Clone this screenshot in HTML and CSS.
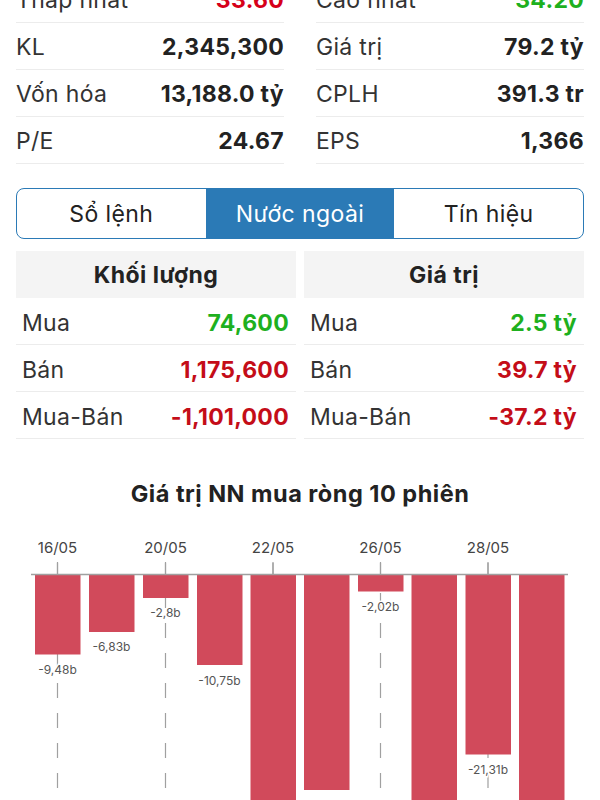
FILE: index.html
```html
<!DOCTYPE html>
<html lang="vi">
<head>
    <meta charset="UTF-8">
    <meta name="viewport" content="width=device-width, initial-scale=1.0">
    <title>Nước ngoài</title>
    <link rel="stylesheet" href="styles.css">
</head>
<body>
    <div class="stats">
        <div class="stats-col">
            <div class="stat-row"><span class="stat-label">Thấp nhất</span><span class="stat-value down-top">33.60</span></div>
            <div class="stat-row"><span class="stat-label">KL</span><span class="stat-value">2,345,300</span></div>
            <div class="stat-row"><span class="stat-label">Vốn hóa</span><span class="stat-value">13,188.0 tỷ</span></div>
            <div class="stat-row"><span class="stat-label">P/E</span><span class="stat-value">24.67</span></div>
        </div>
        <div class="stats-col">
            <div class="stat-row"><span class="stat-label">Cao nhất</span><span class="stat-value up">34.20</span></div>
            <div class="stat-row"><span class="stat-label">Giá trị</span><span class="stat-value">79.2 tỷ</span></div>
            <div class="stat-row"><span class="stat-label">CPLH</span><span class="stat-value">391.3 tr</span></div>
            <div class="stat-row"><span class="stat-label">EPS</span><span class="stat-value">1,366</span></div>
        </div>
    </div>

    <div class="tabs">
        <div class="tab">Sổ lệnh</div>
        <div class="tab active">Nước ngoài</div>
        <div class="tab">Tín hiệu</div>
    </div>

    <div class="foreign">
        <div class="foreign-table">
            <div class="foreign-head">Khối lượng</div>
            <div class="foreign-row"><span>Mua</span><span class="num up">74,600</span></div>
            <div class="foreign-row"><span>Bán</span><span class="num down">1,175,600</span></div>
            <div class="foreign-row"><span>Mua-Bán</span><span class="num down">-1,101,000</span></div>
        </div>
        <div class="foreign-table">
            <div class="foreign-head">Giá trị</div>
            <div class="foreign-row"><span>Mua</span><span class="num up">2.5 tỷ</span></div>
            <div class="foreign-row"><span>Bán</span><span class="num down">39.7 tỷ</span></div>
            <div class="foreign-row"><span>Mua-Bán</span><span class="num down">-37.2 tỷ</span></div>
        </div>
    </div>

    <h3 class="chart-title">Giá trị NN mua ròng 10 phiên</h3>

    <svg class="chart" width="600" height="280" viewBox="0 520 600 280">
        <!-- grid lines, every second session -->
        <g class="grid">
            <line x1="57.5" y1="563" x2="57.5" y2="800"/>
            <line x1="165.5" y1="563" x2="165.5" y2="800"/>
            <line x1="273" y1="563" x2="273" y2="800"/>
            <line x1="380.5" y1="563" x2="380.5" y2="800"/>
            <line x1="488" y1="563" x2="488" y2="800"/>
        </g>
        <g class="ticks">
            <line x1="57.5" y1="562" x2="57.5" y2="574"/>
            <line x1="165.5" y1="562" x2="165.5" y2="574"/>
            <line x1="273" y1="562" x2="273" y2="574"/>
            <line x1="380.5" y1="562" x2="380.5" y2="574"/>
            <line x1="488" y1="562" x2="488" y2="574"/>
        </g>
        <g class="tick-labels">
            <text x="57.5" y="552.5">16/05</text>
            <text x="165.5" y="552.5">20/05</text>
            <text x="273" y="552.5">22/05</text>
            <text x="380.5" y="552.5">26/05</text>
            <text x="488" y="552.5">28/05</text>
        </g>
        <g class="bars">
            <rect x="35" y="574" width="45.5" height="80.5"/>
            <rect x="89" y="574" width="45.5" height="58"/>
            <rect x="143" y="574" width="45.5" height="24"/>
            <rect x="197" y="574" width="45.5" height="91"/>
            <rect x="250.5" y="574" width="45.5" height="260"/>
            <rect x="304" y="574" width="45.5" height="216"/>
            <rect x="358" y="574" width="45.5" height="17.5"/>
            <rect x="411.5" y="574" width="45.5" height="250"/>
            <rect x="465.5" y="574" width="45.5" height="180.5"/>
            <rect x="519" y="574" width="45.5" height="240"/>
        </g>
        <line class="axis" x1="31" y1="574.5" x2="568" y2="574.5"/>
        <g class="bar-labels">
            <text x="57.5" y="673.5">-9,48b</text>
            <text x="111.5" y="651">-6,83b</text>
            <text x="165.5" y="617">-2,8b</text>
            <text x="219.5" y="684.5">-10,75b</text>
            <text x="380.5" y="610.5">-2,02b</text>
            <text x="488" y="774">-21,31b</text>
        </g>
    </svg>
</body>
</html>
```

FILE: styles.css
```css
body {
    font-family: Inter, "Noto Sans", sans-serif;
    background-color: #fff;
    color: #222;
    margin: 0;
    padding: 0 16px;
    overflow: hidden;
}

/* summary of the session */
.stats {
    display: grid;
    grid-template-columns: 1fr 1fr;
    column-gap: 32px;
    margin-top: -24px;
}
.stat-row {
    display: flex;
    justify-content: space-between;
    align-items: center;
    height: 44px;
    padding-top: 2px;
    border-bottom: 1px solid #ececec;
    font-size: 23px;
    letter-spacing: 0.3px;
}
.stat-label {
    color: #333;
}
.stat-value {
    font-weight: 700;
    color: #222;
}
.up {
    color: #1eb01e !important;
}
.down {
    color: #c40d18 !important;
}
.down-top {
    color: #d6001a !important;
}

/* segmented control */
.tabs {
    display: flex;
    margin-top: 24px;
    border: 1px solid #2b7ab6;
    border-radius: 8px;
    overflow: hidden;
    height: 49px;
}
.tab {
    flex: 1;
    display: flex;
    align-items: center;
    justify-content: center;
    font-size: 23px;
    letter-spacing: 0.4px;
    color: #222;
}
.tab.active {
    background-color: #2b7ab6;
    color: #fff;
}

/* foreign trading tables */
.foreign {
    display: grid;
    grid-template-columns: 1fr 1fr;
    column-gap: 8px;
    margin-top: 12px;
}
.foreign-head {
    background-color: #f4f4f4;
    height: 47px;
    display: flex;
    align-items: center;
    justify-content: center;
    font-size: 23px;
    letter-spacing: 0.5px;
    font-weight: 700;
}
.foreign-row {
    display: flex;
    justify-content: space-between;
    align-items: center;
    height: 43px;
    padding: 3px 7px 0 6px;
    border-bottom: 1px solid #ececec;
    font-size: 23px;
    letter-spacing: 0.3px;
    color: #333;
}
.foreign-row .num {
    font-weight: 700;
}

/* chart */
.chart-title {
    margin: 41px 0 0;
    text-align: center;
    font-size: 23.5px;
    font-weight: 700;
    letter-spacing: 0.5px;
    color: #222;
    line-height: 28px;
}
.chart {
    display: block;
    margin: 12px 0 0 -16px;
}
.grid line {
    stroke: #a0a0a0;
    stroke-width: 1.2;
    stroke-dasharray: 15 15;
}
.ticks line {
    stroke: #a0a0a0;
    stroke-width: 1.2;
}
.axis {
    stroke: #a0a0a0;
    stroke-width: 1.5;
}
.bars rect {
    fill: #d14a5b;
}
.tick-labels text {
    font-size: 15px;
    fill: #444;
    text-anchor: middle;
}
.bar-labels text {
    font-size: 12px;
    fill: #555;
    text-anchor: middle;
    stroke: #fff;
    stroke-width: 3px;
    paint-order: stroke;
}
```
